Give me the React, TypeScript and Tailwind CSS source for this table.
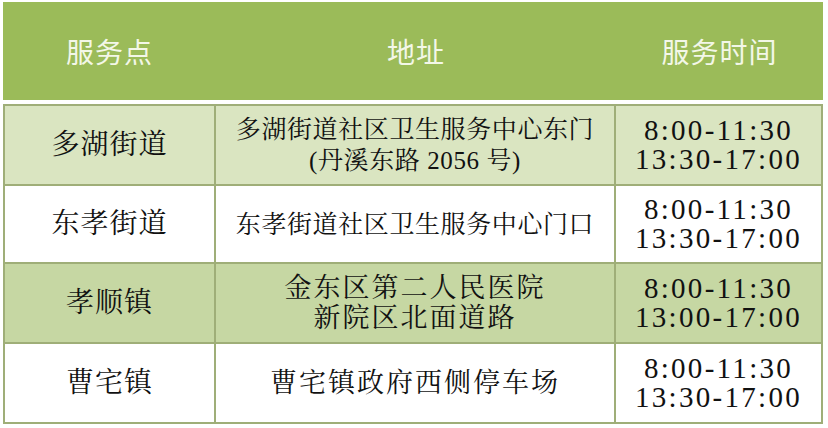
const rows = [
  {
    name: "多湖街道",
    addr: ["多湖街道社区卫生服务中心东门", "(丹溪东路 2056 号)"],
    small: true,
    times: ["8:00-11:30", "13:30-17:00"],
    bg: "bg-[#dae5c1]",
  },
  {
    name: "东孝街道",
    addr: ["东孝街道社区卫生服务中心门口"],
    small: true,
    times: ["8:00-11:30", "13:30-17:00"],
    bg: "bg-white",
  },
  {
    name: "孝顺镇",
    addr: ["金东区第二人民医院", "新院区北面道路"],
    small: false,
    times: ["8:00-11:30", "13:00-17:00"],
    bg: "bg-[#c6d7a3]",
  },
  {
    name: "曹宅镇",
    addr: ["曹宅镇政府西侧停车场"],
    small: false,
    times: ["8:00-11:30", "13:30-17:00"],
    bg: "bg-white",
  },
];

const sans = "font-['Noto_Sans_CJK_SC','Noto_Sans',sans-serif]";
const serif = "font-['Liberation_Serif','Noto_Serif_CJK_SC','Noto_Sans_CJK_SC',serif]";

export default function App() {
  return (
    <div className="w-[828px] h-[428px] bg-white pt-[2px] pl-[3px] overflow-hidden">
      {/* header */}
      <div className={`w-[820px] h-[98px] bg-[#9bbb59] grid grid-cols-[213px_400px_207px] items-center text-[#f3f7e8] text-[28px] tracking-[1px] ${sans}`}>
        <div className="text-center">服务点</div>
        <div className="text-center">地址</div>
        <div className="text-center">服务时间</div>
      </div>
      <div className="h-[4px]" />
      <div className={`w-[820px] border-l-2 border-t-2 border-[#9fae78] text-[#111] ${serif}`}>
        {rows.map((r, i) => (
          <div key={i} className={`grid grid-cols-[211px_400px_207px] ${i === 1 ? "h-[78px]" : "h-[80px]"} ${r.bg}`}>
            <div className="border-r-2 border-b-2 border-[#9fae78] flex items-center justify-center text-[28px] tracking-[1px]">
              {r.name}
            </div>
            <div
              className={`border-r-2 border-b-2 border-[#9fae78] flex flex-col items-center justify-center ${
                r.small ? "text-[25px] tracking-[0.6px] leading-[31px]" : "text-[27px] tracking-[2px] leading-[30px]"
              }`}
            >
              {r.addr.map((a) => (
                <div key={a} className="whitespace-nowrap">{a}</div>
              ))}
            </div>
            <div className="border-r-2 border-b-2 border-[#9fae78] flex flex-col items-center justify-center text-[29px] leading-[29px] tracking-[2.3px]">
              {r.times.map((t) => (
                <div key={t} className="whitespace-nowrap">{t}</div>
              ))}
            </div>
          </div>
        ))}
      </div>
    </div>
  );
}
